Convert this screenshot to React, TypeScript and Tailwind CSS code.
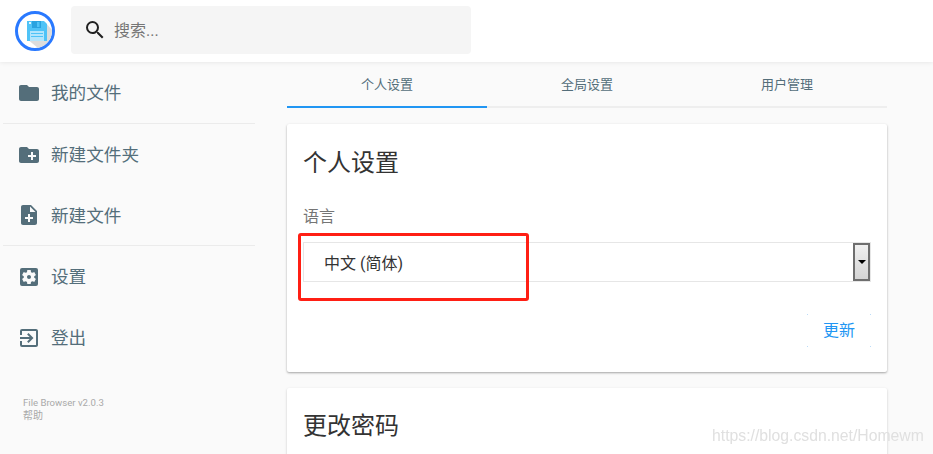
import { MdCreateNewFolder, MdExitToApp, MdFolder, MdNoteAdd, MdSearch, MdSettingsApplications } from "react-icons/md";

const fontStack = "font-['Roboto','Noto_Sans_CJK_SC',sans-serif]";

function Logo() {
  return (
    <svg viewBox="0 0 40 40" className="h-10 w-10">
      <circle cx="20" cy="20" r="18.5" fill="#fff" stroke="#2979ff" strokeWidth="3" />
      <path d="M30 11 L37 19 A17.5 17.5 0 0 1 23 37 L12 28 Z" fill="#dcdcdc" />
      <path d="M12 10 H29 L32 13 V30 H12 Z" fill="#4fc3f7" />
      <rect x="17" y="10" width="9" height="7" fill="#29a3e0" />
      <rect x="14" y="11" width="2" height="2" fill="#e1f5fe" />
      <rect x="22" y="11" width="2.5" height="5" fill="#4fc3f7" />
      <rect x="15" y="20" width="14" height="10" fill="#b3e5fc" />
      <rect x="16" y="22" width="12" height="1" fill="#4fc3f7" />
      <rect x="16" y="25" width="12" height="1" fill="#4fc3f7" />
    </svg>
  );
}

function NavItem({ icon, label, short }: { icon: React.ReactNode; label: string; short?: boolean }) {
  return (
    <div className={`flex items-center gap-[10px] pl-[17px] text-[17.6px] text-[#546e7a] ${short ? "h-[60px]" : "h-[61px]"}`}>
      {icon}
      <span className="translate-y-px">{label}</span>
    </div>
  );
}

function Dot({ className }: { className: string }) {
  return <span className={`absolute h-px w-px bg-[#bcdcf8] ${className}`} />;
}

export default function App() {
  return (
    <div className={`relative flex h-screen flex-col overflow-hidden bg-[#fafafa] ${fontStack}`}>
      {/* Header */}
      <header className="z-10 flex h-[62px] shrink-0 items-center gap-4 bg-white pl-[15px] shadow-[0_0_5px_rgba(0,0,0,0.1)]">
        <Logo />
        <div className="flex h-12 w-[400px] items-center gap-[7px] rounded bg-[#f5f5f5] pl-3 -translate-y-px">
          <MdSearch className="h-6 w-6 text-[#212121]" />
          <span className="translate-y-px text-base text-[#757575]">搜索...</span>
        </div>
      </header>

      <div className="flex min-h-0 flex-1">
        {/* Sidebar */}
        <aside className="w-[287px] shrink-0">
          <NavItem icon={<MdFolder className="h-6 w-6" />} label="我的文件" />
          <div className="ml-[3px] h-px w-[252px] bg-[#ebebeb]" />
          <NavItem icon={<MdCreateNewFolder className="h-6 w-6" />} label="新建文件夹" />
          <NavItem icon={<MdNoteAdd className="h-6 w-6" />} label="新建文件" short />
          <div className="ml-[3px] h-px w-[252px] bg-[#ebebeb]" />
          <NavItem icon={<MdSettingsApplications className="h-6 w-6" />} label="设置" />
          <NavItem icon={<MdExitToApp className="h-6 w-6" />} label="登出" />
          <div className="pl-[23px] pt-[28px] text-[9.6px] leading-[13px] text-[#a9a9a9]">
            <p>File Browser v2.0.3</p>
            <p className="text-[10px]">帮助</p>
          </div>
        </aside>

        {/* Main */}
        <main className="w-[600px] shrink-0">
          <div className="flex h-[46px] border-b-2 border-[#eeeeee] text-[13px] text-[#546e7a]">
            <div className="-mb-[2px] flex w-1/3 items-center justify-center border-b-2 border-[#2196f3] pt-[2px]">个人设置</div>
            <div className="flex w-1/3 items-center justify-center pt-[2px]">全局设置</div>
            <div className="flex w-1/3 items-center justify-center pt-[2px]">用户管理</div>
          </div>

          <section className="relative mt-4 h-[248px] rounded-[2px] bg-white px-4 pt-[21px] shadow-[0_1px_3px_rgba(0,0,0,0.12),0_1px_2px_rgba(0,0,0,0.24)]">
            <h2 className="text-2xl leading-[36px] text-[#333333]">个人设置</h2>
            <p className="mt-[24px] text-base leading-[24px] text-[#757575]">语言</p>
            <div className="relative mt-[13px] flex h-10 w-[568px] items-center border border-[#e6e6e6] pl-5 text-base text-[#333333]">
              <span className="flex-1 translate-y-[2px]">中文 (简体)</span>
              <div className="flex h-[38px] w-[17px] items-center justify-center border-2 border-[#6e6e6e] bg-gradient-to-b from-[#f0f0f0] to-[#d4d4d4]">
                <div className="h-0 w-0 border-x-[4px] border-t-[4px] border-x-transparent border-t-black" />
              </div>
              {/* red annotation */}
              <div className="absolute left-[-6px] top-[-10px] h-[68px] w-[231px] rounded-[3px] border-[3px] border-[#ff1f14]" />
            </div>
            <div className="mt-[32px] flex justify-end">
              <div className="relative flex h-[33px] w-[64px] items-center justify-center text-base text-[#2196f3]">
                更新
                <Dot className="left-0 top-0" />
                <Dot className="right-0 top-0" />
                <Dot className="bottom-0 left-0" />
                <Dot className="bottom-0 right-0" />
              </div>
            </div>
          </section>

          <section className="mt-4 h-[120px] rounded-[2px] bg-white px-4 pt-[20px] shadow-[0_1px_3px_rgba(0,0,0,0.12),0_1px_2px_rgba(0,0,0,0.1)]">
            <h2 className="text-2xl leading-[36px] text-[#333333]">更改密码</h2>
          </section>
        </main>
      </div>

      {/* Watermark */}
      <span className="absolute left-[712px] top-[426px] font-['Liberation_Sans',sans-serif] text-[15.75px] leading-5 text-[#e0e0e0] blur-[0.3px]">
        https://blog.csdn.net/Homewm
      </span>
    </div>
  );
}
